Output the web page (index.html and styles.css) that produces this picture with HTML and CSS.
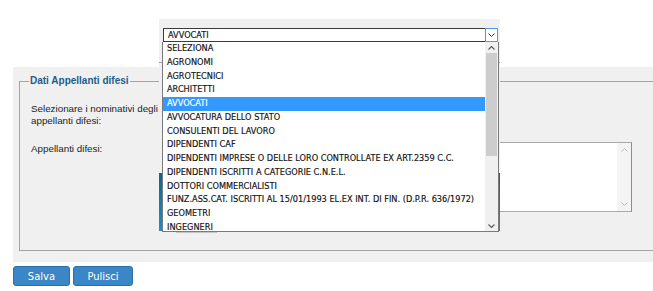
FILE: index.html
```html
<!DOCTYPE html>
<html lang="it">
<head>
  <meta charset="UTF-8" />
  <title>Dati Appellanti difesi</title>
  <link rel="stylesheet" href="styles.css">
</head>
<body>

  <div class="page">
    <div class="panel">
      <fieldset class="group">
        <legend>Dati Appellanti difesi</legend>
        <div class="form-grid">
          <div class="lbl">Selezionare i nominativi degli appellanti difesi:</div>
          <div></div>
          <div class="lbl lbl-second">Appellanti difesi:</div>
          <div class="picked">
            <div class="picked-body"></div>
            <div class="picked-scroll">
              <svg width="7" height="4" viewBox="0 0 7 4"><path d="M0.5 3.5 L3.5 0.5 L6.5 3.5" fill="none" stroke="#b8b8b8" stroke-width="1"/></svg>
              <svg width="7" height="4" viewBox="0 0 7 4"><path d="M0.5 0.5 L3.5 3.5 L6.5 0.5" fill="none" stroke="#b8b8b8" stroke-width="1"/></svg>
            </div>
          </div>
        </div>
      </fieldset>
    </div>

    <div class="actions">
      <button class="btn">Salva</button>
      <button class="btn btn-wide">Pulisci</button>
    </div>
  </div>

  <!-- finestra con la tendina aperta -->
  <div class="popup">
    <div class="select">
      <span class="select-value">AVVOCATI</span>
      <span class="select-arrow">
        <svg width="7" height="4" viewBox="0 0 7 4"><path d="M0.5 0.5 L3.5 3.5 L6.5 0.5" fill="none" stroke="#333" stroke-width="1"/></svg>
      </span>
    </div>
    <div class="popup-rule"></div>
    <div class="popup-band"></div>
    <div class="popup-edge"></div>
  </div>

  <div class="dropdown">
    <ul class="options">
      <li>SELEZIONA</li>
      <li>AGRONOMI</li>
      <li>AGROTECNICI</li>
      <li>ARCHITETTI</li>
      <li class="active">AVVOCATI</li>
      <li>AVVOCATURA DELLO STATO</li>
      <li>CONSULENTI DEL LAVORO</li>
      <li>DIPENDENTI CAF</li>
      <li>DIPENDENTI IMPRESE O DELLE LORO CONTROLLATE EX ART.2359 C.C.</li>
      <li>DIPENDENTI ISCRITTI A CATEGORIE C.N.E.L.</li>
      <li>DOTTORI COMMERCIALISTI</li>
      <li>FUNZ.ASS.CAT. ISCRITTI AL 15/01/1993 EL.EX INT. DI FIN. (D.P.R. 636/1972)</li>
      <li>GEOMETRI</li>
      <li>INGEGNERI</li>
    </ul>
    <div class="scrollbar">
      <svg class="sb-arrow" width="7" height="4" viewBox="0 0 7 4"><path d="M0.5 3.5 L3.5 0.5 L6.5 3.5" fill="none" stroke="#606060" stroke-width="1.2"/></svg>
      <div class="sb-thumb"></div>
      <div class="sb-track"></div>
      <svg class="sb-arrow" width="7" height="4" viewBox="0 0 7 4"><path d="M0.5 0.5 L3.5 3.5 L6.5 0.5" fill="none" stroke="#606060" stroke-width="1.2"/></svg>
    </div>
  </div>

</body>
</html>
```

FILE: styles.css
```css
/* --- base --- */
* {
  box-sizing: border-box;
}
body {
  margin: 0;
  background: #fff;
  font-family: "Liberation Sans", Arial, sans-serif;
  color: #222;
  overflow: hidden;
}
.page {
  padding: 67px 0 0 13px;
}

/* --- pannello grigio con il fieldset (continua oltre il bordo destro) --- */
.panel {
  background: #f0f0f0;
  width: 640px;
  height: 195px;
  padding: 7px 0 0 6px;
  overflow: hidden;
}
.group {
  width: 660px;
  height: 177px;
  margin: 0;
  border: 1px solid #a3a3a3;
  padding: 0 0 0 9px;
}
.group legend {
  padding: 0 1px;
  font-size: 10px;
  line-height: 14px;
  font-weight: 700;
  color: #1c5d8c;
}
.form-grid {
  display: grid;
  grid-template-columns: 134px 467px;
  row-gap: 15px;
  padding-top: 15px;
  margin-left: 2px;
}
.lbl {
  font-size: 9.8px;
  line-height: 12px;
  color: #1e1e1e;
}
.lbl-second {
  padding-top: 1px;
}
.picked {
  display: flex;
  height: 70px;
  background: #fff;
  border: 1px solid #a9a9a9;
  border-right-color: #8c8c8c;
}
.picked-body {
  flex: 1;
}
.picked-scroll {
  width: 14px;
  background: #f4f4f4;
  display: flex;
  flex-direction: column;
  justify-content: space-between;
  align-items: center;
  padding: 5px 0 5px;
}

/* --- pulsanti --- */
.actions {
  display: flex;
  gap: 3px;
  margin-top: 4px;
}
.btn {
  width: 57px;
  height: 20px;
  padding: 0;
  border: 1px solid #2d6ea7;
  border-radius: 3px;
  background: #3a86c6;
  color: #fff;
  font-family: "DejaVu Sans", Verdana, sans-serif;
  font-size: 10px;
}
.btn-wide {
  width: 60px;
}

/* --- finestra sopra il pannello --- */
.popup {
  position: absolute;
  left: 159px;
  top: 19px;
  width: 341px;
  height: 222px;
  background: #f0f0f0;
  padding-top: 9px;
}
.select {
  display: flex;
  width: 335px;
  height: 14px;
  margin-left: 4px;
  background: #fff;
  border: 1px solid #3c3c3c;
}
.select-value {
  flex: 1;
  padding-left: 4px;
  font-family: "DejaVu Sans", Verdana, sans-serif;
  font-size: 8.2px;
  line-height: 12px;
  color: #111;
  -webkit-text-stroke: 0.15px currentColor;
}
.select-arrow {
  width: 13px;
  margin: -1px -1px -1px 0;
  border: 1px solid #4d9be6;
  display: flex;
  align-items: center;
  justify-content: center;
}
.popup-rule {
  height: 1px;
  margin-top: 20px;
  background: #a0a0a0;
}
.popup-band {
  height: 58px;
  margin-top: 110px;
  background: linear-gradient(#07688f, #1a92c9);
}
.popup-edge {
  width: 41px;
  height: 2px;
  margin-left: 17px;
  background: #c4c4c4;
}

/* --- tendina aperta --- */
.dropdown {
  position: absolute;
  left: 162px;
  top: 42px;
  width: 337px;
  height: 190px;
  display: flex;
  background: #fff;
  border: 1px solid #7a7a7a;
  border-top: none;
  overflow: hidden;
}
.options {
  flex: 1;
  margin: 0;
  padding: 0;
  list-style: none;
}
.options li {
  height: 13.75px;
  padding-left: 4px;
  font-family: "DejaVu Sans", Verdana, sans-serif;
  font-size: 8.2px;
  line-height: 13.75px;
  color: #111;
  -webkit-text-stroke: 0.15px currentColor;
  white-space: nowrap;
}
.options li.active {
  background: #3399ff;
  color: #fff;
}
.scrollbar {
  width: 13px;
  background: #f0f0f0;
  display: flex;
  flex-direction: column;
  align-items: center;
}
.sb-arrow {
  flex: none;
  margin: 4px 0 3px;
}
.sb-thumb {
  width: 11px;
  height: 103px;
  background: #cdcdcd;
}
.sb-track {
  flex: 1;
}
```
